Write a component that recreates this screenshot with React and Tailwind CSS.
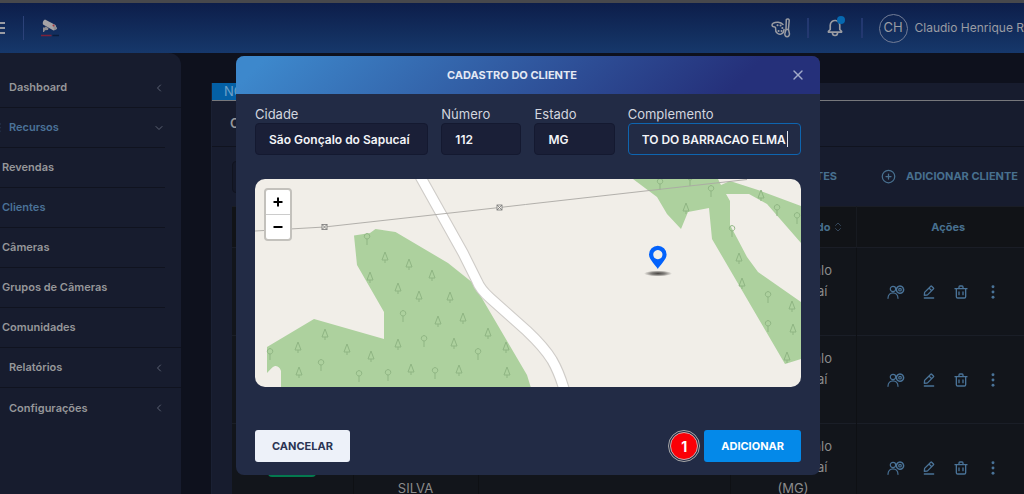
import { Fragment } from "react";
import { ChevronDown, ChevronLeft, CirclePlus, ChevronsUpDown, Home, Layers, BarChart3, Settings, X } from "lucide-react";

const menuItems = [
    { label: "Dashboard", icon: Home },
    { label: "Recursos", icon: Layers, open: true, children: ["Revendas", "Clientes", "Câmeras", "Grupos de Câmeras", "Comunidades"] },
    { label: "Relatórios", icon: BarChart3 },
    { label: "Configurações", icon: Settings },
];

const clients = [1, 2, 3];

// [x, y] of each tree symbol on the map
const roundTrees = [
    [367, 240], [403, 317], [424, 342], [478, 355], [270, 355], [321, 366], [359, 377], [388, 376], [435, 374],
    [660, 185], [690, 181], [711, 192], [732, 232], [777, 211], [797, 219], [768, 298], [768, 327],
];
const pineTrees = [
    [385, 258], [409, 265], [370, 278], [432, 276], [398, 289], [419, 297], [450, 298], [438, 322], [463, 319],
    [488, 334], [325, 335], [298, 348], [347, 350], [371, 357], [398, 345], [454, 344], [506, 348], [507, 373],
    [299, 373], [411, 370], [459, 371], [686, 209], [761, 196], [739, 259], [742, 284], [792, 307], [793, 330], [787, 358],
];

const BellIcon = () => (
    <svg viewBox="0 0 24 24" className="size-5 fill-current">
        <path d="M20.52 15.21l-1.8-1.81V8.94a6.86 6.86 0 0 0-5.82-6.88 6.74 6.74 0 0 0-7.62 6.67v4.67l-1.8 1.81A1.64 1.64 0 0 0 4.64 18H8v.34A3.84 3.84 0 0 0 12 22a3.84 3.84 0 0 0 4-3.66V18h3.36a1.64 1.64 0 0 0 1.16-2.79zM14 18.34A1.88 1.88 0 0 1 12 20a1.88 1.88 0 0 1-2-1.66V18h4zM5.51 16l1.18-1.18a2 2 0 0 0 .59-1.42V8.73A4.73 4.73 0 0 1 8.9 5.17 4.67 4.67 0 0 1 12.64 4a4.86 4.86 0 0 1 4.08 4.9v4.5a2 2 0 0 0 .58 1.42L18.49 16z" />
    </svg>
);

const PaletteIcon = () => (
    <svg viewBox="0 0 20 20" className="size-5" fill="none" stroke="currentColor" strokeWidth="1.5" strokeLinejoin="round" strokeLinecap="round">
        <path d="M12 6.500C9.500 3.800 5 3.500 2.300 5.200c-2 1.300-1.500 3.500.4 3.500 1.500 0 2 .6 1.900 2C4.300 14.500 7 16.800 10 16c2-.6 3-2 3-4.500" />
        <path d="M15.300 1.500c1-1 3-.6 2.900 1l-.8 9h-2.400zM15 11.500h2.500l.9 3.800c.3 2-.9 3.400-2.300 3.400-1.500 0-2.500-1.400-2.200-3.200z" />
        <path d="M6.500 7.300h.1M9.500 7.500h.1M11.300 10h.1M7.500 13h.1M10.500 13h.1" strokeWidth="2" />
    </svg>
);

const CameraLogo = () => (
    <svg viewBox="0 0 18 18" className="size-[18px]">
        <path d="M4 .5 14.500 6l1.500 4-3.500 1.500L2 5.500c-.8-2 .3-4.300 2-5z" fill="#a5a3a6" />
        <path d="M4.500 7.500 7.500 9 7 11l-3 .3L3 13H2V8.500h2zM12 5l4 4-3 2.500z" fill="#8d8b90" />
        <circle cx="12.500" cy="6.500" r="1" fill="#a83540" />
        <path d="M0 16.500h10.500" stroke="#7c2039" strokeWidth="1.500" />
        <path d="M11.500 16.500H18" stroke="#0a1c3c" strokeWidth="1.500" />
    </svg>
);

const UserGearIcon = () => (
    <svg viewBox="0 0 18 14" className="h-3.5 w-[18px]" fill="none" stroke="currentColor" strokeWidth="1.200" strokeLinecap="round">
        <circle cx="6" cy="4" r="2.700" />
        <path d="M1 13.300c0-7.200 10-7.200 10 0" />
        <circle cx="13" cy="4.700" r="1.300" />
        <circle cx="13" cy="4.700" r="3.600" strokeWidth="1.500" strokeDasharray="2.300 .7" />
    </svg>
);

const EditIcon = () => (
    <svg viewBox="0 0 24 24" className="size-4 fill-current">
        <path d="M19 20H5a1 1 0 0 0 0 2h14a1 1 0 0 0 0-2zM5 18h.09l4.17-.38a2 2 0 0 0 1.21-.57l9-9a1.92 1.92 0 0 0-.07-2.71L16.66 2.600A2 2 0 0 0 14 2.530l-9 9a2 2 0 0 0-.57 1.210L4 16.910A1 1 0 0 0 5 18zM15.270 4 18 6.730l-2 1.950L13.320 6zm-8.900 8.910L12 7.320l2.700 2.700-5.600 5.600-3 .28z" />
    </svg>
);

const TrashIcon = () => (
    <svg viewBox="0 0 24 24" className="size-4 fill-current">
        <path d="M21 6h-5V4.330A2.420 2.420 0 0 0 13.500 2h-3A2.420 2.420 0 0 0 8 4.330V6H3a1 1 0 0 0 0 2h1v11a3 3 0 0 0 3 3h10a3 3 0 0 0 3-3V8h1a1 1 0 0 0 0-2zM10 4.330c0-.16.21-.33.5-.33h3c.29 0 .5.17.5.33V6h-4zM18 19a1 1 0 0 1-1 1H7a1 1 0 0 1-1-1V8h12z" />
        <path d="M9 17a1 1 0 0 0 1-1v-4a1 1 0 0 0-2 0v4a1 1 0 0 0 1 1zM15 17a1 1 0 0 0 1-1v-4a1 1 0 0 0-2 0v4a1 1 0 0 0 1 1z" />
    </svg>
);

const MoreIcon = () => (
    <svg viewBox="0 0 24 24" className="size-4 fill-current">
        <circle cx="12" cy="4" r="2.200" />
        <circle cx="12" cy="12" r="2.200" />
        <circle cx="12" cy="20" r="2.200" />
    </svg>
);

const Header = () => (
    <header className="flex h-[50px] items-center justify-between bg-linear-to-b from-[#0d1e4a] to-[#16386b] px-2 text-[#9a9ca3]">
        <div className="flex items-center">
            <button aria-label="Menu" className="flex w-[13px] flex-col gap-[3px]">
                <span className="h-0.5 bg-current" />
                <span className="h-0.5 bg-current" />
                <span className="h-0.5 bg-current" />
            </button>
            <span className="ml-[18px] h-6 w-px bg-[#2c4279]" />
            <a href="#" aria-label="Início" className="ml-[17px]">
                <CameraLogo />
            </a>
        </div>
        <div className="flex items-center pr-2">
            <button aria-label="Tema">
                <PaletteIcon />
            </button>
            <span className="mx-4 h-5 w-0.5 bg-[#233870]" />
            <button aria-label="Notificações" className="relative">
                <BellIcon />
                <span className="absolute -top-0.5 right-0 size-2 rounded-full bg-[#0668b0]" />
            </button>
            <span className="mx-4 h-5 w-0.5 bg-[#233870]" />
            <span className="flex size-[29px] items-center justify-center rounded-full border border-[#737d96] text-[13px]">CH</span>
            <span className="ml-[7px] text-[12px]">Claudio Henrique R</span>
        </div>
    </header>
);

const Sidebar = () => (
    <nav className="w-[197px] shrink-0 rounded-tr-xl bg-[#171c2e] pt-[15px] text-[11px] font-semibold text-[#96979a]">
        {menuItems.map(({ label, icon: Icon, open, children }, index) => (
            <Fragment key={label}>
                <a
                    href="#"
                    className={`flex h-10 items-center justify-between ${open ? "mr-4 text-[#4b7298]" : "pr-4"} ${index < 3 ? "border-b border-[#10131f]" : ""}`}
                >
                    <span className="flex items-center gap-2">
                        <Icon className="size-[17px]" />
                        {label}
                    </span>
                    {open ? <ChevronDown className="size-3 text-[#5c6273]" /> : <ChevronLeft className="size-3 text-[#5c6273]" />}
                </a>
                {children?.map((child, i) => (
                    <a
                        href="#"
                        key={child}
                        className={`flex h-10 items-center border-b border-[#10131f] pl-[18px] ${i < 4 ? "mr-4" : ""} ${child === "Clientes" ? "text-[#4b7298]" : ""}`}
                    >
                        {child}
                    </a>
                ))}
            </Fragment>
        ))}
    </nav>
);

const ClientsTable = () => (
    <table className="w-full table-fixed border-collapse bg-[#12151b] text-center text-[13px] leading-[21px] text-[#8b8b8c]">
        <thead className="bg-[#111317] text-[11px] font-bold text-[#48708f]">
            <tr className="h-[41px] border-y border-[#1a1d26]">
                <th className="w-[121px] border-r border-[#171a20]">Status</th>
                <th className="w-[125px] border-r border-[#171a20]">Nome</th>
                <th className="w-[252px] border-r border-[#171a20]">E-mail</th>
                <th className="w-[126px] border-r border-[#171a20]">
                    <span className="flex items-center justify-end gap-px pr-3">
                        Cidade/Estado
                        <ChevronsUpDown className="size-3 text-[#34465a]" />
                    </span>
                </th>
                <th>Ações</th>
            </tr>
        </thead>
        <tbody>
            {clients.map((id) => (
                <tr key={id} className="h-[88px] border-b border-[#1a1e27]">
                    <td className="border-r border-[#0e1014]">
                        <span className="inline-block h-[18px] w-12 rounded-sm bg-[#04794f] align-middle text-[11px] leading-[18px]">Ativo</span>
                    </td>
                    <td className="border-r border-[#0e1014] px-4">CLAUDIO HENRIQUE SILVA</td>
                    <td className="border-r border-[#0e1014]" />
                    <td className="border-r border-[#0e1014] px-5">São Gonçalo do Sapucaí (MG)</td>
                    <td>
                        <div className="flex items-center justify-center gap-4 pr-2 text-[#4a7398]">
                            <button aria-label="Usuários"><UserGearIcon /></button>
                            <button aria-label="Editar"><EditIcon /></button>
                            <button aria-label="Excluir"><TrashIcon /></button>
                            <button aria-label="Mais opções"><MoreIcon /></button>
                        </div>
                    </td>
                </tr>
            ))}
        </tbody>
    </table>
);

const ClientsPanel = () => (
    <main className="min-w-0 flex-1 pl-[30px] pt-[30px]">
        <section className="min-h-full border-l border-[#1a2033] bg-[#171c2e]">
            <div className="flex h-[18px] border-b border-[#77787c]">
                <button className="bg-[#0460a5] px-3 text-[13px] leading-[17px] text-[#6fa0c8]">NOC</button>
            </div>
            <h1 className="flex h-[46px] items-center border-b border-[#10131f] pl-[18px] text-[13px] font-semibold text-[#96979a]">Clientes</h1>
            <div className="flex h-[59px] items-center justify-between pl-5 pr-[22px] text-[11px] font-bold text-[#48708f]">
                <input aria-label="Buscar" className="h-8 w-48 rounded border border-[#10131f] bg-[#141828]" />
                <div className="flex items-center gap-11">
                    <button>EXPORTAR CLIENTES</button>
                    <button className="flex items-center gap-2.5">
                        <CirclePlus className="size-[15px]" />
                        ADICIONAR CLIENTE
                    </button>
                </div>
            </div>
            <div className="pl-5">
                <ClientsTable />
            </div>
        </section>
    </main>
);

const Field = ({ id, label, value, className = "", focused }) => (
    <div className={`flex min-w-0 flex-col ${className}`}>
        <label htmlFor={id} className="text-[13px] leading-[17px] text-[#d3d6df]">{label}</label>
        {focused ? (
            <div className="relative">
                <input
                    id={id}
                    defaultValue={value}
                    className="h-8 w-full rounded border border-[#0e65b0] bg-[#222b45] px-[13px] text-[12px] font-semibold text-[#f3f4f8] outline-none"
                />
                <span className="absolute right-[13px] top-2 h-4 w-px bg-[#e6e8ef]" />
            </div>
        ) : (
            <input
                id={id}
                defaultValue={value}
                className="h-8 w-full rounded border border-[#141930] bg-[#1a1f37] px-[13px] text-[12px] font-semibold text-[#f3f4f8] outline-none"
            />
        )}
    </div>
);

const LocationMap = () => (
    <div className="relative mt-6 h-52 overflow-hidden rounded-[10px] bg-[#f1eee8]">
        <svg viewBox="255 179 546 208" preserveAspectRatio="xMidYMid slice" className="size-full">
            <g fill="#add19e">
                <path d="M354 235.500 370 233l5.500-4 20 3L448 263l25 20 54 92 4 13H281v-17c-1-4-4-5-6-5-3 1-5 4-8 7v-26l47-28 70 20v-27l-27-47z" />
                <path d="M633 179 657 197l10 17 14 15 7-17 21-4 3 31 73 125 16-5v-57l-43-30-11-15-10-19-7-13v-24l-4-7h23l18 10 34 39v-37l-43-16-28-9-9 4-3-6z" />
            </g>
            <g fill="none" stroke="#8fb583" strokeWidth="1">
                {roundTrees.map(([x, y]) => (
                    <path key={`${x}-${y}`} d={`M${x} ${y + 5}v-6a2.700 2.700 0 1 1 .1 0`} />
                ))}
                {pineTrees.map(([x, y]) => (
                    <path key={`${x}-${y}`} d={`M${x} ${y + 5}v-3m-3 0 3-8 3 8z`} />
                ))}
            </g>
            <path d="M420 176 463 253l14 28q3 8 13 17l37 33q17 16 25 29 7 12 12 29" fill="none" stroke="#cfccc8" strokeWidth="11.500" />
            <path d="M420 176 463 253l14 28q3 8 13 17l37 33q17 16 25 29 7 12 12 29" fill="none" stroke="#fff" strokeWidth="9.300" />
            <path d="M255 231 324.500 227l175-19.500 26-3L747 179.500" fill="none" stroke="#aaa8a4" strokeWidth=".9" />
            {[[324.5, 227], [499.5, 207.5]].map(([x, y]) => (
                <g key={x} stroke="#777" strokeWidth=".8" fill="#f1eee8">
                    <rect x={x - 2.5} y={y - 2.5} width="5" height="5" />
                    <path d={`M${x - 2.5} ${y - 2.5}l5 5m0-5-5 5`} />
                </g>
            ))}
            <defs>
                <radialGradient id="shadow">
                    <stop offset="0" stopColor="#4b4845" />
                    <stop offset=".5" stopColor="#4b4845" stopOpacity=".65" />
                    <stop offset="1" stopColor="#4b4845" stopOpacity="0" />
                </radialGradient>
            </defs>
            <ellipse cx="658" cy="273.500" rx="14" ry="3" fill="url(#shadow)" />
            <path fillRule="evenodd" fill="#0362fb" d="M657.800 269c-2-3.500-8.800-9.500-8.800-14.500a8.800 8.800 0 0 1 17.600 0c0 5-6.800 11-8.800 14.500zm0-19a4.600 4.600 0 1 0 .1 0z" />
        </svg>
        <div className="absolute left-[9px] top-[9px] flex flex-col rounded border-2 border-[#c3c1bc] bg-white text-black">
            <button aria-label="Aproximar" className="flex h-[25px] w-6 items-center justify-center border-b border-[#ccc]">
                <svg viewBox="0 0 10 10" className="size-[10px]"><path d="M5 .5v9M.5 5h9" stroke="#000" strokeWidth="2" /></svg>
            </button>
            <button aria-label="Afastar" className="flex h-6 w-6 items-center justify-center">
                <svg viewBox="0 0 10 10" className="size-[10px]"><path d="M.5 5h9" stroke="#000" strokeWidth="2" /></svg>
            </button>
        </div>
    </div>
);

const ClientDialog = () => (
    <div className="fixed inset-0 flex items-start justify-center pl-8 pt-14">
        <div role="dialog" aria-labelledby="dialog-title" className="w-full max-w-[584px] overflow-hidden rounded-lg bg-[#222b45]">
            <div className="flex h-[38px] items-center bg-linear-135 from-[#3d88cc] from-5% to-[#25307a] to-85% pr-3.5">
                <h2 id="dialog-title" className="flex-1 text-center text-[11px] font-bold text-[#e4e9f4]">CADASTRO DO CLIENTE</h2>
                <button aria-label="Fechar" className="pl-0.5 text-[#a3abc9]">
                    <X className="size-4" />
                </button>
            </div>
            <form className="px-[19px] pb-[13px] pt-3" onSubmit={(e) => e.preventDefault()}>
                <div className="grid grid-cols-6 gap-[13px]">
                    <Field id="cidade" label="Cidade" value="São Gonçalo do Sapucaí" className="col-span-2" />
                    <Field id="numero" label="Número" value="112" />
                    <Field id="estado" label="Estado" value="MG" />
                    <Field id="complemento" label="Complemento" value="TO DO BARRACAO ELMA" className="col-span-2" focused />
                </div>
                <LocationMap />
                <div className="mt-[43px] flex items-center justify-between text-[11px] font-bold">
                    <button type="button" className="h-8 rounded-[3px] bg-[#edf1f9] px-[17px] text-[#2b3453]">CANCELAR</button>
                    <div className="flex items-center gap-1">
                        <span className="flex size-8 items-center justify-center rounded-full border border-[#a9a9a9] p-px">
                            <span className="flex size-full items-center justify-center rounded-full border border-[#c9b0b0] bg-[#fb0007] text-[14px] text-white">1</span>
                        </span>
                        <button className="h-8 rounded-[3px] bg-[#0489e9] px-[17px] text-white">ADICIONAR</button>
                    </div>
                </div>
            </form>
        </div>
    </div>
);

export default function App() {
    return (
        <div className="h-screen overflow-hidden bg-[#0e111d] font-['Inter',sans-serif]">
            <div className="-mx-4 flex h-full flex-col">
                <div className="h-[3px] shrink-0 bg-[#47484c]" />
                <Header />
                <div className="flex min-h-0 flex-1">
                    <Sidebar />
                    <ClientsPanel />
                </div>
            </div>
            <ClientDialog />
        </div>
    );
}
